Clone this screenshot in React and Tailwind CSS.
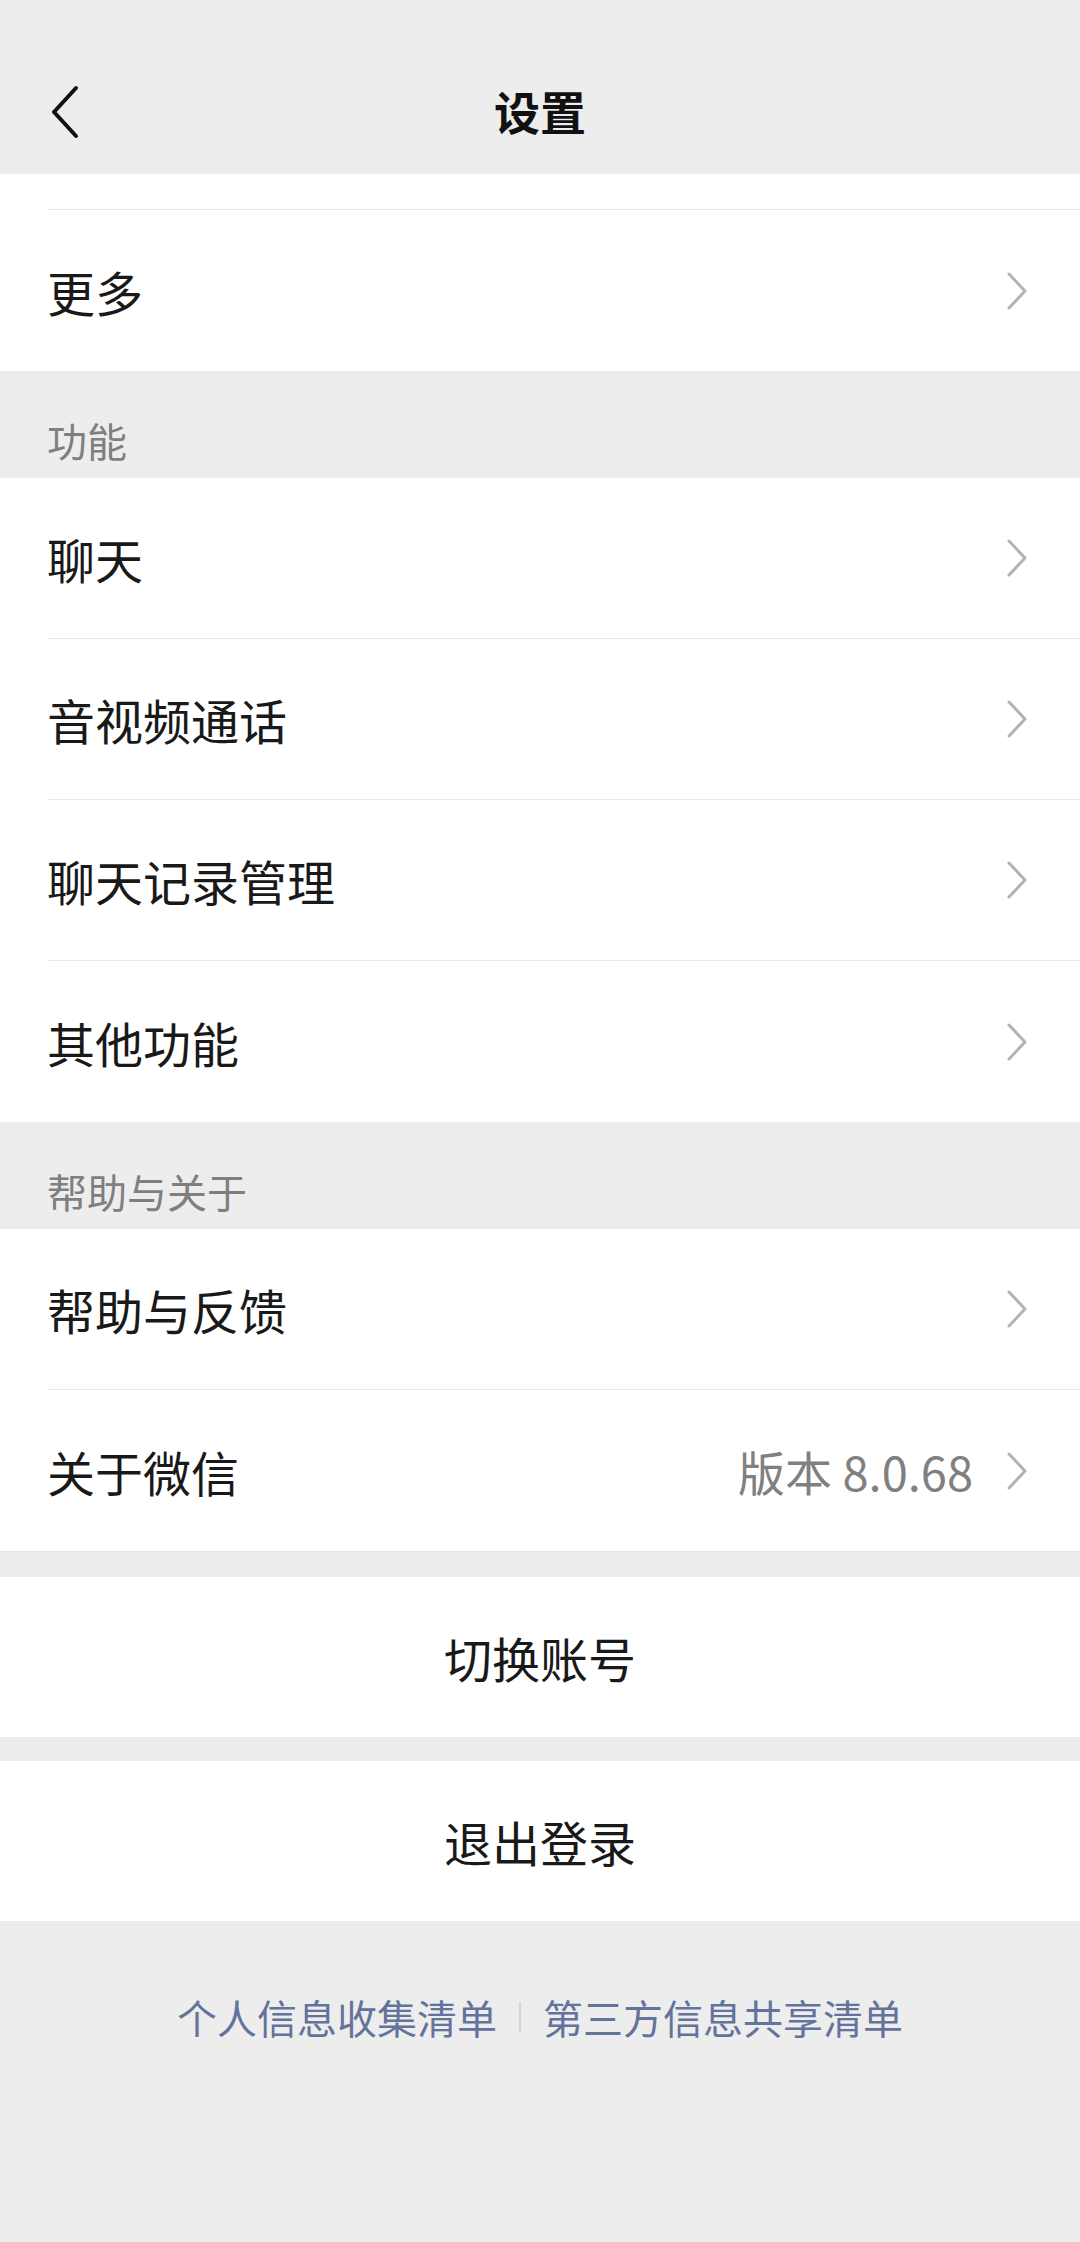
import React from "react";

const font = { fontFamily: '"Noto Sans CJK SC", "Noto Sans", sans-serif' };

function Chevron() {
  return (
    <svg width="24" height="40" viewBox="0 0 24 40" className="shrink-0">
      <polyline points="4,3 20,20 4,37" fill="none" stroke="#b3b3b3" strokeWidth="3" strokeLinecap="round" strokeLinejoin="round" />
    </svg>
  );
}

function Row({ label, value, last }) {
  return (
    <div className="pl-[47px]">
      <div className={`flex items-center h-[161px] pr-[51px] ${last ? "" : "border-b border-[#e8e8e8]"}`}>
        <span className="flex-1 text-[48px] leading-none text-[#191919]">{label}</span>
        {value && <span className="text-[47px] leading-none text-[#808080] mr-[32px]">{value}</span>}
        <Chevron />
      </div>
    </div>
  );
}

function SectionTitle({ children }) {
  return (
    <div className="h-[107px] flex items-end pl-[47px] pb-[18px] text-[40px] leading-none text-[#7f7f7f]">
      {children}
    </div>
  );
}

export default function App() {
  return (
    <div className="min-h-[2242px] bg-[#ededed]" style={font}>
      {/* header */}
      <div className="relative h-[174px] flex items-end justify-center pb-[41px]">
        <svg width="34" height="56" viewBox="0 0 34 56" className="absolute left-[47px] top-[84px]">
          <polyline points="29,4 7,28 29,52" fill="none" stroke="#111" strokeWidth="4" strokeLinecap="round" strokeLinejoin="round" />
        </svg>
        <span className="text-[46px] leading-none font-semibold text-[#111]">设置</span>
      </div>

      <div className="bg-white">
        <div className="h-[36px] ml-[47px] border-b border-[#e8e8e8]" />
        <Row label="更多" last />
      </div>

      <SectionTitle>功能</SectionTitle>
      <div className="bg-white">
        <Row label="聊天" />
        <Row label="音视频通话" />
        <Row label="聊天记录管理" />
        <Row label="其他功能" last />
      </div>

      <SectionTitle>帮助与关于</SectionTitle>
      <div className="bg-white border-b border-[#e5e5e5]">
        <Row label="帮助与反馈" />
        <Row label="关于微信" value="版本 8.0.68" last />
      </div>

      <div className="mt-[25px] bg-white h-[160px] flex items-center justify-center text-[48px] leading-none text-[#191919]">
        切换账号
      </div>
      <div className="mt-[24px] bg-white h-[160px] flex items-center justify-center text-[48px] leading-none text-[#191919]">
        退出登录
      </div>

      <div className="mt-[76px] flex items-center justify-center text-[40px] leading-none text-[#63739c]">
        <span>个人信息收集清单</span>
        <span className="mx-[22px] w-[2px] h-[30px] bg-[#d6d6d6]" />
        <span>第三方信息共享清单</span>
      </div>
    </div>
  );
}
